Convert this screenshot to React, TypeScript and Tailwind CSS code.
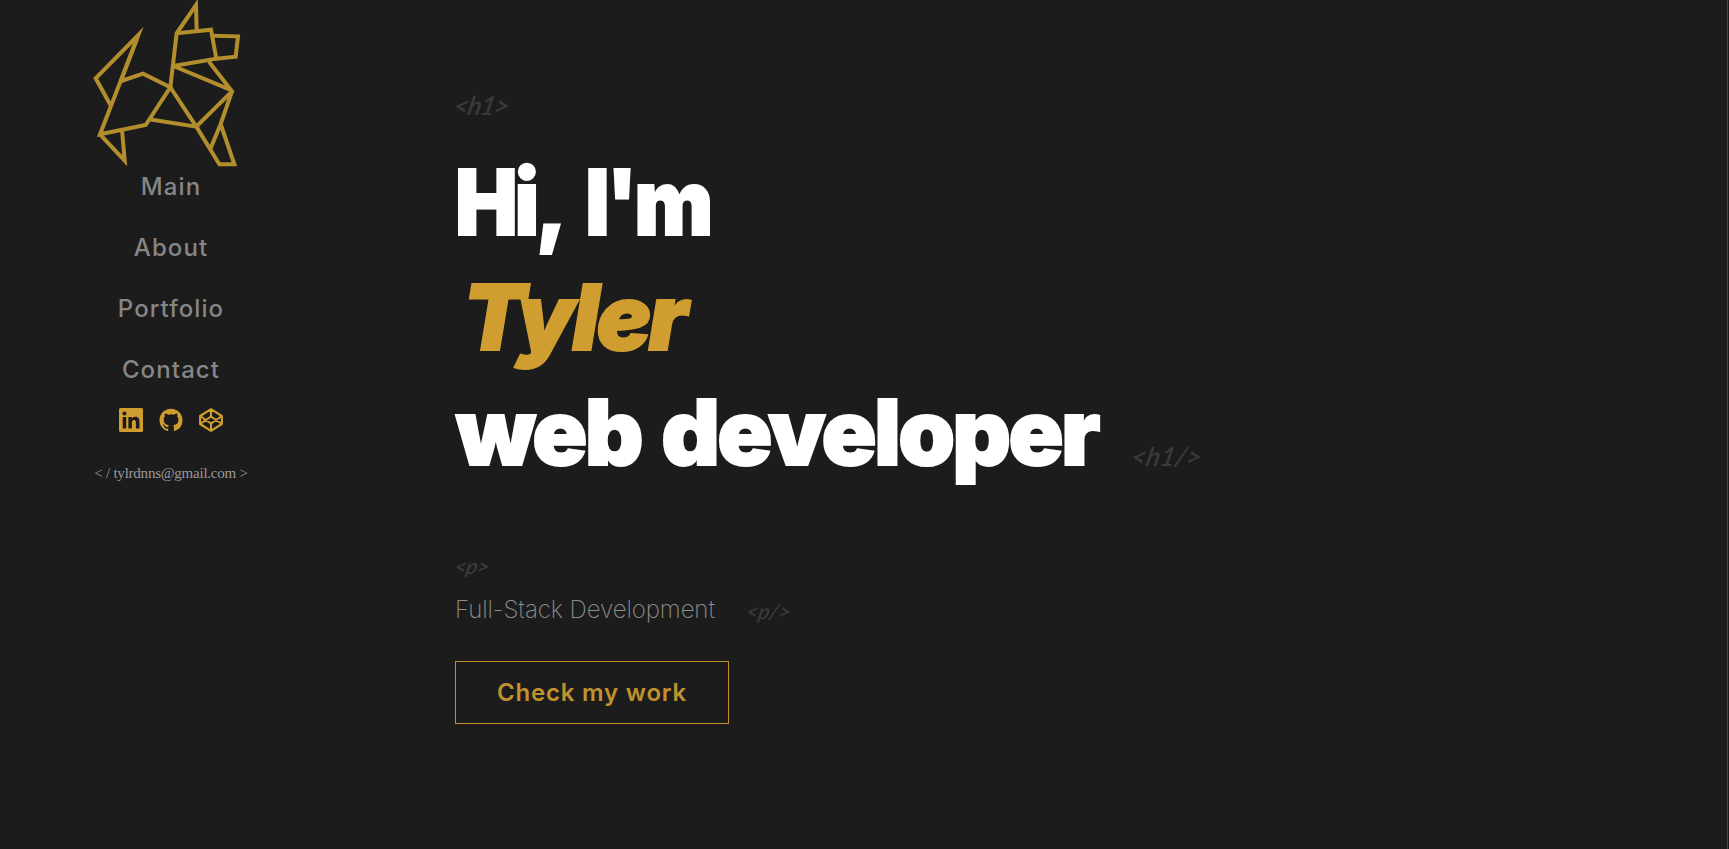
import React from 'react';

const LINKS = ['Main', 'About', 'Portfolio', 'Contact'];

function Logo() {
  return (
    <svg viewBox="0 0 540 525" className="-ml-[2px] h-[175px] w-[180px]" fill="none" stroke="#b28e2c" strokeWidth="12" strokeMiterlimit="10">
      <path d="M122 244 L175 105 L47 235 L91 314" />
      <path d="M171 116 L60 403 L197 375 L271 262 L189 221 L124 243" />
      <path d="M60 403 L134 482 L126 389" />
      <path d="M207 358 L349 380 L271 262 L290 100 L348 15 L350 91" />
      <path d="M290 100 L393 89 L409 176 L280 198" />
      <path d="M399 107 L474 109 L467 170 L409 176" />
      <path d="M280 198 L450 269 M387 185 L456 274 L349 380 L418 493 L463 493 L422 372" />
      <path d="M456 274 L422 372 L391 447" />
    </svg>
  );
}

function LinkedIn() {
  return (
    <svg viewBox="0 0 24 24" className="size-6" fill="currentColor">
      <path fillRule="evenodd" d="M1.500 0h21A1.500 1.500 0 0 1 24 1.500v21a1.500 1.500 0 0 1-1.500 1.500h-21A1.500 1.500 0 0 1 0 22.500v-21A1.500 1.500 0 0 1 1.500 0zM3.700 9.100v11.400h3.500V9.100zM5.450 3.500a2.050 2.050 0 1 0 0 4.100 2.050 2.050 0 0 0 0-4.100zM9.400 9.100v11.400h3.500v-5.700c0-1.500.3-2.900 2.100-2.900s1.900 1.700 1.900 3v5.600h3.600v-6.200c0-3.100-.7-5.500-4.300-5.500-1.700 0-2.900.9-3.400 1.850V9.100z" />
    </svg>
  );
}

function GitHub() {
  return (
    <svg viewBox="0 0 24 24" className="size-6" fill="currentColor">
      <path d="M12 .8C5.600.8.500 5.900.500 12.200c0 5 3.300 9.300 7.900 10.800.6.100.8-.2.800-.5v-2c-3.200.7-3.900-1.500-3.900-1.500-.5-1.300-1.300-1.700-1.300-1.700-1-.7.1-.7.1-.7 1.200.1 1.800 1.200 1.800 1.200 1 1.700 2.700 1.200 3.300.9.100-.7.4-1.200.7-1.500-2.500-.3-5.200-1.300-5.200-5.600 0-1.200.4-2.300 1.200-3-.1-.3-.5-1.500.1-3.100 0 0 1-.3 3.200 1.200a11 11 0 0 1 5.700 0c2.200-1.500 3.200-1.200 3.200-1.200.6 1.600.2 2.800.1 3.100.7.800 1.200 1.800 1.200 3 0 4.400-2.700 5.300-5.300 5.600.4.400.8 1 .8 2.100v3.200c0 .3.200.7.800.5a11.400 11.400 0 0 0 7.800-10.800C23.500 5.900 18.400.8 12 .8z" />
    </svg>
  );
}

function CodePen() {
  return (
    <svg viewBox="0 0 24 24" className="size-6" fill="none" stroke="currentColor" strokeWidth="2.100" strokeLinejoin="round">
      <path d="M12 1.200 22.900 8v8L12 22.800 1.100 16V8zM12 1.200V8.500M12 15.500v7.300M1.100 8 12 15.500 22.900 8M1.100 16 12 8.500 22.900 16" />
    </svg>
  );
}

function Tag({ children, className }: { children: string; className: string }) {
  return (
    <span className={`inline-block -skew-x-12 font-['Lato',sans-serif] font-semibold italic text-[#3a3a3a] ${className}`}>
      {children}
    </span>
  );
}

export default function App() {
  return (
    <div className="h-[849px] w-full bg-[#1c1c1c]">
      <div className="flex h-full w-[1728px] overflow-hidden border-r border-[#444444] font-['Inter',sans-serif]">
        <aside className="flex w-[341px] shrink-0 flex-col items-center">
          <Logo />
          <nav className="-mt-[19px] flex flex-col items-center">
            {LINKS.map((l) => (
              <a key={l} href="#" className="flex h-[61px] items-center pl-px text-[24px] font-medium tracking-[1.1px] text-[#868686]">
                {l}
              </a>
            ))}
          </nav>
          <div className="mt-[8px] ml-px flex gap-4 text-[#d09e30]">
            <LinkedIn />
            <GitHub />
            <CodePen />
          </div>
          <p className="mt-[31px] ml-px font-['Liberation_Serif',serif] text-[15px] leading-[20px] tracking-[-0.230px] whitespace-nowrap text-[#9a9a9a]">
            &lt; / tylrdnns@gmail.com &gt;
          </p>
        </aside>

        <main className="flex flex-col items-start pt-[88px] pl-[114px]">
          <Tag className="-ml-[3px] h-[57px] text-[26px] leading-[34px] tracking-[-1.200px]">{'<h1>'}</Tag>
          <h1 className="flex flex-col text-[91px] leading-[115px] font-black whitespace-nowrap text-white [-webkit-text-stroke:2px_currentColor] [stroke-linejoin:round]">
            <span className="origin-left scale-x-[0.92] tracking-[-3.600px] [word-spacing:14px]">Hi, I'm</span>
            <span className="pl-[8px] tracking-[-2.700px] text-[#d09e30] italic">Tyler</span>
            <span className="flex items-end gap-8 pl-px">
              <span className="tracking-[-2.700px] [word-spacing:5px]">web developer</span>
              <Tag className="pb-[17px] text-[26px] leading-[34px] tracking-[0px] [-webkit-text-stroke:0]">{'<h1/>'}</Tag>
            </span>
          </h1>
          <Tag className="mt-[61px] text-[21px] leading-[30px] tracking-[-0.500px]">{'<p>'}</Tag>
          <p className="mt-[9px] flex h-[40px] items-center gap-8 text-[24px] font-extralight text-[#8d8d8d]">
            <span className="tracking-[-0.070px]">Full-Stack Development</span>
            <Tag className="pt-[2px] text-[21px]">{'<p/>'}</Tag>
          </p>
          <button className="mt-[31px] h-[63px] w-[274px] border border-[#c0922e] text-[24px] font-semibold tracking-[0.800px] text-[#c0922e]">
            Check my work
          </button>
        </main>
      </div>
    </div>
  );
}
